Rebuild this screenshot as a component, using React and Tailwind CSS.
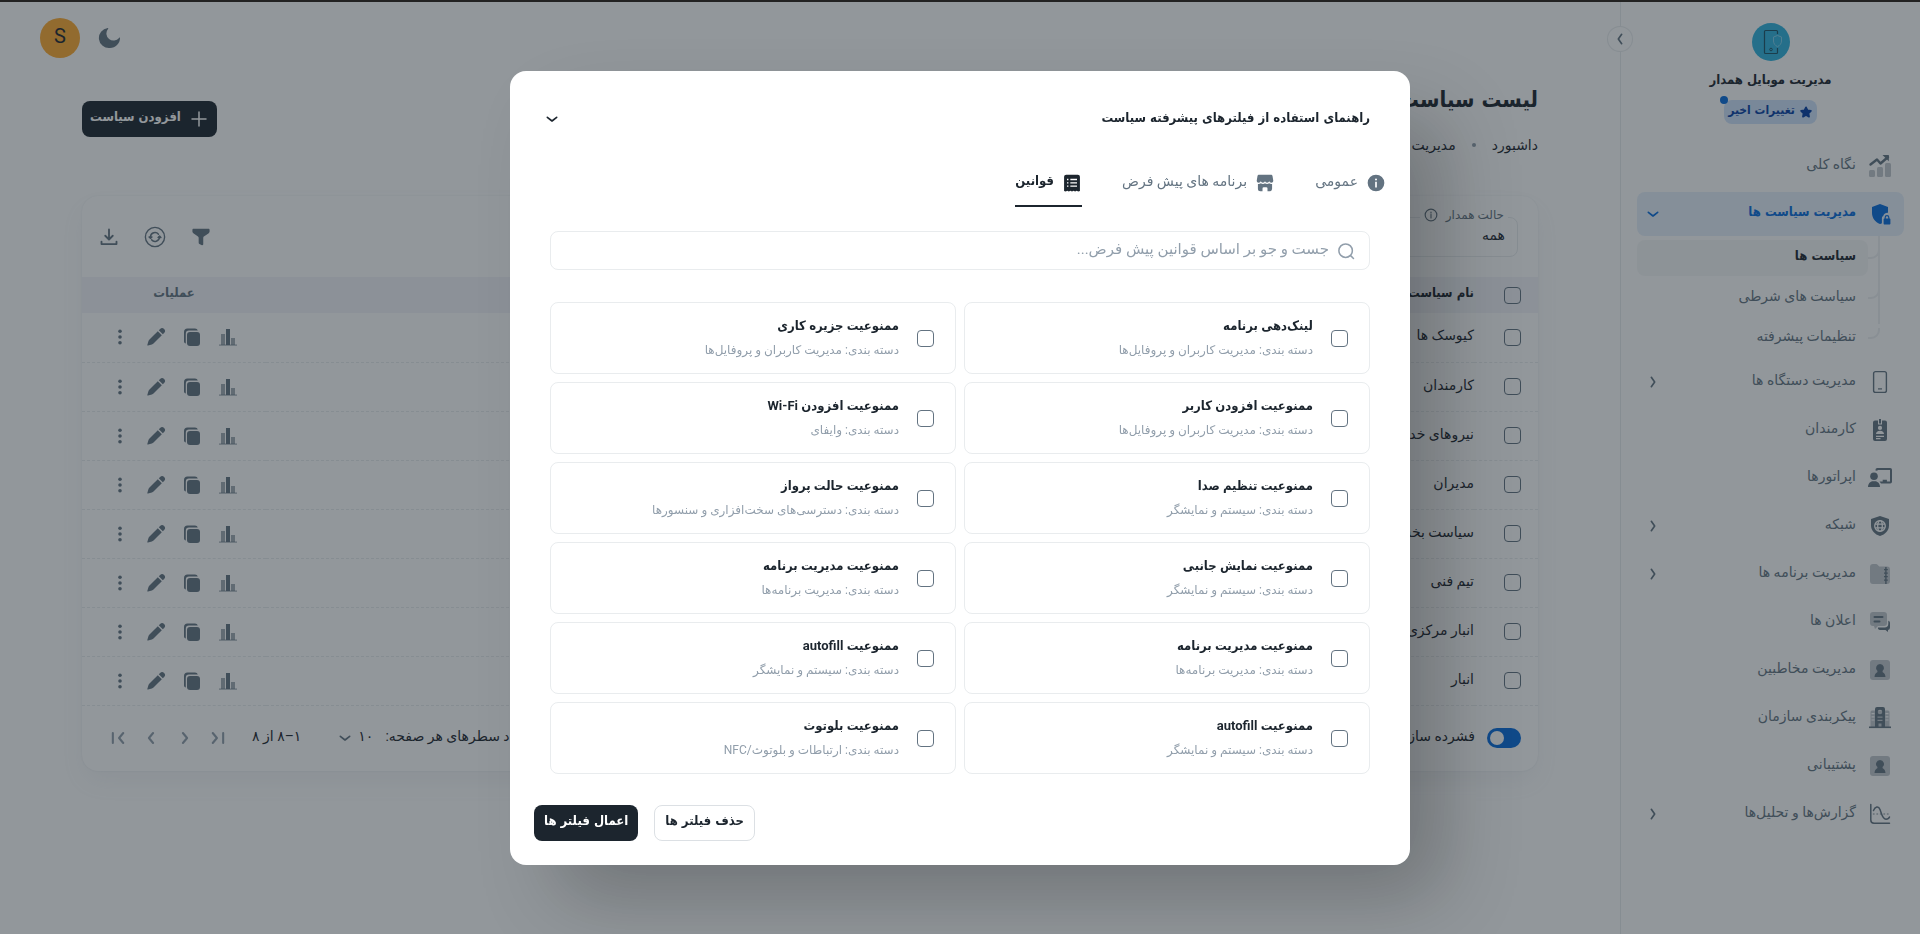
import React, { useState } from 'react';

const NavIcon = ({ name }) => {
  const icons = {
    overview: (
      <>
        <rect x="1" y="16" width="6" height="7" rx="1.5" opacity="0.4" />
        <rect x="9" y="13" width="6" height="10" rx="1.5" opacity="0.4" />
        <rect x="17" y="9" width="6" height="14" rx="1.5" opacity="0.4" />
        <path d="M2.5 10.5L9 5.5L12.5 9.5L20 3" fill="none" stroke="currentColor" strokeWidth="2.4" strokeLinejoin="round" strokeLinecap="round" />
        <path d="M14.5 1h6.3v6.2z" />
      </>
    ),
    policies: (
      <>
        <path d="M12 2L4 5v6.1c0 5 3.3 9.4 8 10.9c.7-.2 1.3-.5 1.9-.8v-5.2a2 2 0 0 1 1.3-1.9C15.6 12 17.5 10.5 20 10.7V5z" />
        <path d="M21.4 16.4v-1a2.4 2.4 0 0 0-4.8 0v1c-.6 0-1 .4-1 1v4c0 .6.4 1 1 1h4.800c.6 0 1-.4 1-1v-4c0-.6-.4-1-1-1zm-3.6 0v-1a1.2 1.2 0 0 1 2.4 0v1z" />
      </>
    ),
    devices: (
      <>
        <rect x="5.6" y="1.6" width="12.8" height="20.8" rx="2" fill="none" stroke="currentColor" strokeWidth="1.4" />
        <rect x="10" y="18.3" width="4" height="1.2" />
      </>
    ),
    employees: (
      <path
        fillRule="evenodd"
        d="M11 1h2v4.5h-2zM7 2.5h3v4h4v-4h3a2 2 0 0 1 2 2V21a2 2 0 0 1-2 2H7a2 2 0 0 1-2-2V4.500a2 2 0 0 1 2-2zm5 5.300a2 2 0 1 0 0 4.200a2 2 0 0 0 0-4.200zM8 16h8c0-2-1.500-3.300-4-3.300S8 14 8 16zm0 1.800V19h8v-1.200zm0 2.300v1.200h4.500v-1.200z"
      />
    ),
    operators: (
      <>
        <path d="M7.5 4.5V3.8A1.8 1.8 0 0 1 9.300 2h12.900A1.800 1.800 0 0 1 24 3.800v11.900a1.800 1.800 0 0 1-1.800 1.800H13l-1.500-2h3.200v-1.700h4.200v1.700H22V4H9.500v.8z" />
        <circle cx="6" cy="10.3" r="3.8" />
        <path d="M0 21c0-3.500 2.300-5.800 5-5.800h2c2.700 0 5 2.300 5 5.800z" />
      </>
    ),
    network: (
      <>
        <path d="M12 2L3 5v6.200c0 5.200 3.800 9.300 9 10.800c5.200-1.500 9-5.600 9-10.800V5z" />
        <g fill="none" className="stroke-white" strokeWidth="1.3">
          <circle cx="12" cy="12" r="5.3" />
          <ellipse cx="12" cy="12" rx="2.3" ry="5.3" />
          <path d="M7.200 10.200h9.600M7.200 13.800h9.600" />
        </g>
      </>
    ),
    apps: (
      <>
        <path opacity="0.4" d="M2 5a3 3 0 0 1 3-3h2.500c1 0 1.600.3 2.300 1l1.400 1.400H19a3 3 0 0 1 3 3V19a3 3 0 0 1-3 3H5a3 3 0 0 1-3-3z" />
        <path d="M17.200 5h1.400v17h-1.400z" />
        <path d="M16 7h3.800v1.200H16zM16 10.500h3.800v1.200H16zM16 14h3.800v1.200H16zM16 17.500h3.800v1.200H16z" />
      </>
    ),
    messages: (
      <>
        <path opacity="0.4" d="M5 2h11a3 3 0 0 1 3 3v8a3 3 0 0 1-3 3h-6l-3 3l-1-3H5a3 3 0 0 1-3-3V5a3 3 0 0 1 3-3z" />
        <path d="M6.500 6h8a1 1 0 0 1 0 2h-8a1 1 0 0 1 0-2zM6.500 10.500h5a1 1 0 0 1 0 2h-5a1 1 0 0 1 0-2z" />
        <path d="M20.300 10.800c1 .2 1.700 1 1.700 2.200v4.500a2.500 2.500 0 0 1-2 2.500v2l-2.500-2H12a2 2 0 0 1-2-2.500h6.500a3.800 3.800 0 0 0 3.800-3.800z" />
      </>
    ),
    contacts: (
      <>
        <rect x="2" y="2" width="20" height="20" rx="3" opacity="0.4" />
        <path d="M12 6a4 4 0 0 0-2.500 7.100l-.2 1.200C7.600 15 6.600 16.800 6.500 19h11c-.1-2.200-1.100-4-2.800-4.700l-.2-1.200A4 4 0 0 0 12 6z" />
      </>
    ),
    organization: (
      <>
        <path opacity="0.4" fillRule="evenodd" d="M2.500 6a1.500 1.500 0 0 1 1.500-1.500h16A1.500 1.500 0 0 1 21.500 6v15h-19zM3.500 7v1.200h3V7zm0 3.200v1.200h3v-1.200zm0 3.200v1.200h3v-1.200zM17.500 7v1.200h3V7zm0 3.200v1.200h3v-1.200zm0 3.200v1.200h3v-1.200z" />
        <path fillRule="evenodd" d="M9 1h6a2 2 0 0 1 2 2v18h-3.500v-3.500h-3V21H7V3a2 2 0 0 1 2-2zm3 2.700a2.300 2.300 0 1 0 0 4.600a2.300 2.300 0 0 0 0-4.600zM9.500 10.500v1.200h5v-1.200zm0 3.200v1.200h5v-1.200z" />
        <rect x="1" y="20.5" width="22" height="1.6" />
      </>
    ),
    reports: (
      <g fill="none" stroke="currentColor" strokeWidth="1.5" strokeLinecap="round">
        <path d="M2.800 2.500V18a3.200 3.200 0 0 0 3.200 3.200h15.500" />
        <path d="M5.500 8.500C7 4.500 10.500 3.500 12 7.500c1.500 4 2.500 9.800 6 9.800c1.800 0 3-1 3.500-2.300" />
        <path d="M5.500 12h16" strokeDasharray="0.5 3" opacity="0.6" />
      </g>
    ),
  };
  return (
    <svg viewBox="0 0 24 24" fill="currentColor" className="size-6 shrink-0" aria-hidden="true">
      {icons[name]}
    </svg>
  );
};

const Chevron = ({ className, d }) => (
  <svg viewBox="0 0 24 24" fill="none" stroke="currentColor" strokeWidth="2.5" strokeLinecap="round" strokeLinejoin="round" className={className} aria-hidden="true">
    <path d={d} />
  </svg>
);

const CHEVRON_DOWN = 'M5 9.5l7 5.500l7-5.500';
const CHEVRON_LEFT = 'M14.500 5l-5 7l5 7';
const CHEVRON_RIGHT = 'M9.500 5l5 7l-5 7';

const Checkbox = ({ id, label }) => (
  <input
    id={id}
    type="checkbox"
    aria-label={label}
    className="block size-[17px] shrink-0 appearance-none rounded border border-[#637381] checked:bg-[#637381]"
  />
);

const topItems = [
  { icon: 'overview', title: 'نگاه کلی' },
];

const policyItems = ['سیاست ها', 'سیاست های شرطی', 'تنظیمات پیشرفته'];

const bottomItems = [
  { icon: 'devices', title: 'مدیریت دستگاه ها', children: true },
  { icon: 'employees', title: 'کارمندان' },
  { icon: 'operators', title: 'اپراتورها' },
  { icon: 'network', title: 'شبکه', children: true },
  { icon: 'apps', title: 'مدیریت برنامه ها', children: true },
  { icon: 'messages', title: 'اعلان ها' },
  { icon: 'contacts', title: 'مدیریت مخاطبین' },
  { icon: 'organization', title: 'پیکربندی سازمان' },
  { icon: 'contacts', title: 'پشتیبانی' },
  { icon: 'reports', title: 'گزارش‌ها و تحلیل‌ها', children: true },
];

const rows = ['کیوسک ها', 'کارمندان', 'نیروهای خدماتی', 'مدیران', 'سیاست بخش اداری', 'تیم فنی', 'انبار مرکزی', 'انبار'];

const rules = [
  { title: 'لینک‌دهی برنامه', category: 'مدیریت کاربران و پروفایل‌ها' },
  { title: 'ممنوعیت جزیره کاری', category: 'مدیریت کاربران و پروفایل‌ها' },
  { title: 'ممنوعیت افزودن کاربر', category: 'مدیریت کاربران و پروفایل‌ها' },
  { title: 'ممنوعیت افزودن Wi-Fi', category: 'وایفای' },
  { title: 'ممنوعیت تنظیم صدا', category: 'سیستم و نمایشگر' },
  { title: 'ممنوعیت حالت پرواز', category: 'دسترسی‌های سخت‌افزاری و سنسورها' },
  { title: 'ممنوعیت نمایش جانبی', category: 'سیستم و نمایشگر' },
  { title: 'ممنوعیت مدیریت برنامه', category: 'مدیریت برنامه‌ها' },
  { title: 'ممنوعیت مدیریت برنامه', category: 'مدیریت برنامه‌ها' },
  { title: 'ممنوعیت autofill', category: 'سیستم و نمایشگر' },
  { title: 'ممنوعیت autofill', category: 'سیستم و نمایشگر' },
  { title: 'ممنوعیت بلوتوث', category: 'ارتباطات و بلوتوث/NFC' },
];

const NavItem = ({ item }) => (
  <a href="#" className="flex h-11 items-center gap-3 rounded-lg pr-3 pl-2 text-[#637381]">
    <NavIcon name={item.icon} />
    <span className="flex-1 pb-1 text-sm">{item.title}</span>
    {item.children && <Chevron className="size-4" d={CHEVRON_RIGHT} />}
  </a>
);

const Sidebar = () => (
  <aside className="relative flex w-[300px] shrink-0 flex-col border-l border-[#919eab]/20 px-4">
    <button aria-label="بستن منو" className="absolute top-6 -left-3.5 flex size-[26px] items-center justify-center rounded-full border border-[#919eab]/20 bg-white text-[#637381]">
      <Chevron className="size-4" d={CHEVRON_LEFT} />
    </button>

    {/* Logo */}
    <div className="flex flex-col items-center pt-5">
      <svg viewBox="0 0 40 40" className="size-10" aria-hidden="true">
        <circle cx="20" cy="20" r="19" fill="#2eb3df" />
        <path d="M26.500 12V9.500a1 1 0 0 0-1-1h-11a1 1 0 0 0-1 1v21a1 1 0 0 0 1 1h11a1 1 0 0 0 1-1V26" fill="none" stroke="#1c5468" strokeWidth="1.2" />
        <circle cx="20" cy="27.5" r="1.3" fill="none" stroke="#1c5468" strokeWidth="1" />
        <path d="M26.500 13.500l4 1.500v4c0 2.500-1.600 4.500-4 5.700c-2.400-1.200-4-3.200-4-5.700v-4z" fill="none" stroke="#7fd0ee" strokeWidth="1" />
      </svg>
      <p className="mt-2 font-['DejaVu_Sans_Condensed',sans-serif] text-[13px] leading-5 font-bold text-[#1c252e]">مدیریت موبایل همدار</p>
      <a href="#" className="relative mt-2.5 flex h-6 items-center gap-1 rounded-lg bg-[#cfe2fb] px-1 text-[#053fa5]">
        <svg viewBox="0 0 24 24" fill="currentColor" stroke="currentColor" strokeWidth="3" strokeLinejoin="round" className="size-3.5" aria-hidden="true">
          <path d="M12 4l2.600 5.200l5.800.9l-4.200 4.100l1 5.800l-5.200-2.800l-5.200 2.800l1-5.800l-4.200-4.100l5.800-.9z" />
        </svg>
        <span className="pb-1 font-['DejaVu_Sans_Condensed',sans-serif] text-xs font-bold">تغییرات اخیر</span>
        <span className="absolute -top-1 -left-1 size-2 rounded-full bg-[#066bdd]" />
      </a>
    </div>

    <nav className="mt-5 flex flex-col gap-1">
      {topItems.map((item) => (
        <NavItem key={item.title} item={item} />
      ))}
      <a href="#" className="flex h-11 items-center gap-3 rounded-lg bg-[#066bdd]/10 pr-3 pl-2 text-[#066bdd]">
        <NavIcon name="policies" />
        <span className="flex-1 pb-1 font-['DejaVu_Sans_Condensed',sans-serif] text-[13px] font-bold">مدیریت سیاست ها</span>
        <Chevron className="size-4" d={CHEVRON_DOWN} />
      </a>
      <ul className="relative flex flex-col gap-1 pr-9">
        <li className="absolute -top-1 right-6 bottom-8 w-0.5 bg-[#edeff2]" aria-hidden="true" />
        {policyItems.map((title, i) => (
          <li key={title} className="relative">
            <svg viewBox="0 0 12 12" className="absolute top-2 -right-3 size-3" fill="none" stroke="#edeff2" strokeWidth="2" aria-hidden="true">
              <path d="M11 0v2a8 8 0 0 1-8 8H0" />
            </svg>
            <a
              href="#"
              className={
                i === 0
                  ? "flex h-9 items-center rounded-lg bg-[#919eab]/8 px-3 font-['DejaVu_Sans_Condensed',sans-serif] text-[13px] font-bold text-[#1c252e]"
                  : 'flex h-9 items-center rounded-lg px-3 text-sm text-[#637381]'
              }
            >
              <span className="pb-1">{title}</span>
            </a>
          </li>
        ))}
      </ul>
      {bottomItems.map((item) => (
        <NavItem key={item.title} item={item} />
      ))}
    </nav>
  </aside>
);

const RowActions = () => (
  <div className="flex justify-center text-[#637381]">
    <button aria-label="گزارش" className="flex size-9 items-center justify-center">
      <svg viewBox="0 0 20 20" fill="currentColor" className="size-5">
        <rect x="3" y="7" width="4" height="11" opacity="0.6" />
        <rect x="8" y="2" width="4" height="16" />
        <rect x="13" y="11" width="4" height="7" opacity="0.6" />
        <rect x="1" y="17.5" width="18" height="1.2" opacity="0.6" />
      </svg>
    </button>
    <button aria-label="کپی" className="flex size-9 items-center justify-center">
      <svg viewBox="0 0 20 20" fill="currentColor" className="size-5">
        <rect x="5" y="5" width="13" height="14" rx="3" />
        <path d="M2 14.500V5a3.500 3.500 0 0 1 3.500-3.500H13c1.400 0 2.400.8 2.800 2H7A3.200 3.200 0 0 0 3.800 6.700v9.800C2.700 16.200 2 15.500 2 14.500z" />
      </svg>
    </button>
    <button aria-label="ویرایش" className="flex size-9 items-center justify-center">
      <svg viewBox="0 0 20 20" fill="currentColor" className="size-5">
        <path d="M11.800 4.200l4 4l-8.300 8.300c-.5.500-1 .8-1.600 1L2 18.600c-.5.100-.8-.2-.7-.7l1.200-3.800c.2-.6.500-1.100 1-1.600z" />
        <path d="M12.800 3.200l1.300-1.300a2.800 2.800 0 0 1 4 4l-1.300 1.300z" />
      </svg>
    </button>
    <button aria-label="بیشتر" className="flex size-9 items-center justify-center">
      <svg viewBox="0 0 20 20" fill="currentColor" className="size-5">
        <circle cx="10" cy="4.2" r="1.8" />
        <circle cx="10" cy="10" r="1.8" />
        <circle cx="10" cy="15.8" r="1.8" />
      </svg>
    </button>
  </div>
);

const PolicyTable = () => (
  <section className="mt-10 rounded-2xl bg-white shadow-[0_0_2px_0_rgba(145,158,171,0.2),0_12px_24px_-4px_rgba(145,158,171,0.12)]">
    <div className="flex h-[81px] items-center justify-between pr-5 pl-[9px]">
      <div className="relative">
        <label htmlFor="mode" className="absolute -top-3 right-2.5 flex items-center gap-2 bg-white px-1 text-xs leading-5 text-[#637381]">
          حالت همدار
          <svg viewBox="0 0 24 24" fill="none" stroke="currentColor" strokeWidth="2" className="size-3.5" aria-hidden="true">
            <circle cx="12" cy="12" r="10" />
            <path d="M12 11v6M12 7v1.500" strokeLinecap="round" />
          </svg>
        </label>
        <select id="mode" className="h-10 w-[200px] appearance-none rounded-lg border border-[#919eab]/20 px-3 pb-1 text-sm text-[#1c252e]">
          <option>همه</option>
        </select>
      </div>
      <div className="flex gap-2.5 text-[#637381]">
        <button aria-label="فیلتر" className="flex size-9 items-center justify-center">
          <svg viewBox="0 0 24 24" fill="currentColor" className="size-5">
            <path d="M3 2h18c.8 0 1.300.5 1.300 1.300v2.200c0 1-.6 1.800-1.400 2.300l-5 3.200c-.9.600-1.200 1.100-1.200 2.200v7.600c0 .8-.8 1.400-1.600 1l-3-1.300c-.7-.3-.9-.8-.9-1.500v-5.800c0-1-.3-1.600-1.200-2.200L3.200 7.800C2.300 7.300 1.700 6.500 1.700 5.500V3.300C1.700 2.500 2.200 2 3 2z" />
          </svg>
        </button>
        <button aria-label="بروزرسانی" className="flex size-9 items-center justify-center">
          <svg viewBox="0 0 24 24" fill="none" stroke="currentColor" strokeWidth="1.5" strokeLinecap="round" strokeLinejoin="round" className="size-[22px]">
            <circle cx="12" cy="12" r="10.5" />
            <path d="M7 11.500a5 5 0 0 1 8.800-2.500M17 12.500a5 5 0 0 1-8.800 2.500" />
            <path d="M5.500 12l1.500 1.500l1.700-1.500zM15.300 12.500L17 11l1.500 1.500z" fill="currentColor" />
          </svg>
        </button>
        <button aria-label="دانلود" className="flex size-9 items-center justify-center">
          <svg viewBox="0 0 24 24" fill="none" stroke="currentColor" strokeWidth="2.2" strokeLinecap="round" strokeLinejoin="round" className="size-5">
            <path d="M12 3v11.500M7.500 10.500l4.500 4.500l4.500-4.500M3 17.500v3h18v-3" />
          </svg>
        </button>
      </div>
    </div>

    <table className="w-full border-collapse text-sm text-[#1c252e]">
      <thead className="font-['DejaVu_Sans_Condensed',sans-serif] text-[13px]">
        <tr className="h-9 bg-[#f3f4f9] text-[#637381]">
          <th className="w-16 pr-[17px]">
            <Checkbox label="انتخاب همه" />
          </th>
          <th className="pb-1 text-right font-bold text-[#1c252e]">نام سیاست</th>
          <th className="w-[184px] pb-1 text-center font-bold">عملیات</th>
        </tr>
      </thead>
      <tbody>
        {rows.map((name) => (
          <tr key={name} className="h-[49px] border-b border-dashed border-[#919eab]/20">
            <td className="pr-[17px]">
              <Checkbox label={name} />
            </td>
            <td className="pb-1">{name}</td>
            <td>
              <RowActions />
            </td>
          </tr>
        ))}
      </tbody>
    </table>

    <div className="flex h-[65px] items-center justify-between pr-[17px] pl-[18px] text-sm text-[#1c252e]">
      <label className="flex items-center gap-3">
        <input
          type="checkbox"
          role="switch"
          defaultChecked
          className="flex h-5 w-[34px] appearance-none items-center justify-end rounded-full bg-[#066bdd] px-[3px] before:size-3.5 before:rounded-full before:bg-white"
        />
        <span className="pb-1">فشرده سازی</span>
      </label>
      <div className="flex items-center">
        <label htmlFor="per-page" className="pb-1">تعداد سطرهای هر صفحه:</label>
        <div className="mr-3 flex items-center">
          <select id="per-page" className="appearance-none pb-1 text-sm">
            <option>۱۰</option>
          </select>
          <Chevron className="mr-1 size-4 text-[#637381]" d={CHEVRON_DOWN} />
        </div>
        <span className="mr-9 pb-1">۱–۸ از ۸</span>
        <div className="mr-4 flex text-[#919eab]">
          <button aria-label="صفحه اول" className="flex h-9 w-[34px] items-center justify-center">
            <Chevron className="size-5" d="M4.500 6l5 6l-5 6M17 6v12" />
          </button>
          <button aria-label="صفحه قبل" className="flex h-9 w-[34px] items-center justify-center">
            <Chevron className="size-5" d="M9.500 6l5 6l-5 6" />
          </button>
          <button aria-label="صفحه بعد" className="flex h-9 w-[34px] items-center justify-center">
            <Chevron className="size-5" d="M14.500 6l-5 6l5 6" />
          </button>
          <button aria-label="صفحه آخر" className="flex h-9 w-[34px] items-center justify-center">
            <Chevron className="size-5" d="M19.500 6l-5 6l5 6M7 6v12" />
          </button>
        </div>
      </div>
    </div>
  </section>
);

const tabs = [
  {
    id: 'general',
    title: 'عمومی',
    icon: (
      <path fillRule="evenodd" d="M12 2a10 10 0 1 0 0 20a10 10 0 0 0 0-20zm0 4.500a1.200 1.200 0 1 1 0 2.400a1.200 1.200 0 0 1 0-2.400zm-1 4h2v7h-2z" />
    ),
  },
  {
    id: 'apps',
    title: 'برنامه های پیش فرض',
    icon: (
      <>
        <path d="M5 2h14c1.200 0 1.800.5 2 1.600l.9 5.400c.2 1.500-.9 2.700-2.300 2.700c-1.300 0-2.300-.8-2.600-2c-.3 1.200-1.300 2-2.500 2s-2.200-.8-2.500-2c-.3 1.200-1.300 2-2.500 2s-2.200-.8-2.500-2c-.3 1.200-1.300 2-2.600 2C3 11.700 1.900 10.500 2.100 9L3 3.600C3.200 2.500 3.800 2 5 2z" />
        <path d="M3.500 13.200c1.400.2 2.600-.1 3.600-.9c1.400 1.200 3.500 1.200 4.900 0c1.400 1.200 3.500 1.200 4.900 0c1 .8 2.200 1.100 3.600.9V19a3 3 0 0 1-3 3H15v-3.500a1.500 1.500 0 0 0-1.500-1.500h-3A1.500 1.500 0 0 0 9 18.500V22H6.500a3 3 0 0 1-3-3z" />
      </>
    ),
  },
  {
    id: 'rules',
    title: 'قوانین',
    icon: (
      <path
        fillRule="evenodd"
        d="M5 2h14a2.500 2.500 0 0 1 2.500 2.500V21.500l-2 .7l-1.900-1l-1.900 1l-1.900-1l-1.800 1l-1.900-1l-1.900 1l-1.900-1l-1.800 1l-2-.7V4.500A2.500 2.500 0 0 1 5 2zm1 5v1.600h1.700V7zm4 0v1.600h8V7zm-4 4v1.600h1.700V11zm4 0v1.600h8V11zm-4 4v1.600h1.700V15zm4 0v1.600h8V15z"
      />
    ),
  },
];

const FilterDialog = () => {
  const [activeTab, setActiveTab] = useState('rules');

  return (
    <div className="fixed inset-0 top-0.5 flex items-center justify-center bg-[#1c252e]/48">
      <div
        role="dialog"
        aria-modal="true"
        className="w-full max-w-[900px] rounded-2xl bg-white px-6 py-6 shadow-[40px_40px_80px_-8px_rgba(0,0,0,0.24)]"
      >
        <button className="flex h-12 w-full items-center justify-between pr-4 pl-2.5 text-[#1c252e]">
          <span className="pb-0.5 font-['DejaVu_Sans_Condensed',sans-serif] text-[13px] font-bold">راهنمای استفاده از فیلترهای پیشرفته سیاست</span>
          <Chevron className="size-4" d={CHEVRON_DOWN} />
        </button>

        {/* Tabs */}
        <div role="tablist" className="mt-4 flex gap-10">
          {tabs.map((tab) => (
            <button
              key={tab.id}
              role="tab"
              aria-selected={activeTab === tab.id}
              onClick={() => setActiveTab(tab.id)}
              className={
                activeTab === tab.id
                  ? "flex h-12 items-center gap-2 font-['DejaVu_Sans_Condensed',sans-serif] text-[13px] font-bold text-[#1c252e] shadow-[inset_0_-2px_0_0_#1c252e]"
                  : 'flex h-12 items-center gap-2 text-sm text-[#637381]'
              }
            >
              <svg viewBox="0 0 24 24" fill="currentColor" className="size-5" aria-hidden="true">
                {tab.icon}
              </svg>
              <span className="pb-1">{tab.title}</span>
            </button>
          ))}
        </div>

        <div className="px-4">
          <label className="mt-6 flex h-[39px] items-center gap-2 rounded-lg border border-[#919eab]/20 px-3.5">
            <svg viewBox="0 0 24 24" fill="none" stroke="#919eab" strokeWidth="2" strokeLinecap="round" className="size-[18px] shrink-0" aria-hidden="true">
              <circle cx="11.5" cy="11.5" r="9" />
              <path d="M18.500 18.500l3.500 3.500" />
            </svg>
            <input
              type="text"
              aria-label="جست و جو"
              placeholder="جست و جو بر اساس قوانین پیش فرض..."
              className="w-full pb-0.5 text-[15px] outline-none placeholder:text-[#919eab]"
            />
          </label>

          {/* Rules */}
          <div className="mt-8 grid grid-cols-2 gap-2">
            {rules.map((rule, i) => (
              <label key={i} htmlFor={`rule-${i}`} className="flex h-[72px] items-center gap-[18px] rounded-lg border border-[#919eab]/20 pr-[21px]">
                <Checkbox id={`rule-${i}`} />
                <span className="flex flex-col">
                  <span className="font-[Roboto,'DejaVu_Sans_Condensed',sans-serif] text-[13px] leading-6 font-bold text-[#1c252e]">{rule.title}</span>
                  <span className="text-xs leading-6 text-[#919eab]">دسته بندی: {rule.category}</span>
                </span>
              </label>
            ))}
          </div>
        </div>

        {/* Actions */}
        <div className="mt-[31px] flex justify-end gap-4 font-['DejaVu_Sans_Condensed',sans-serif] text-[13px] font-bold">
          <button className="h-9 rounded-lg border border-[#919eab]/32 px-2.5 pb-1 text-[#1c252e]">حذف فیلتر ها</button>
          <button className="h-9 rounded-lg bg-[#1c252e] px-2.5 pb-1 text-white">اعمال فیلتر ها</button>
        </div>
      </div>
    </div>
  );
};

const App = () => {
  return (
    <div dir="rtl" className="flex min-h-screen flex-col bg-white font-[Roboto,'DejaVu_Sans',sans-serif] text-[#1c252e]">
      <div className="h-0.5 bg-[#222222]" />
      <div className="flex flex-1">
        <Sidebar />
        <div className="min-w-0 flex-1">
          <header className="flex h-[72px] items-center justify-end gap-[18px] pl-10">
            <button aria-label="حالت شب" className="text-[#637381]">
              <svg viewBox="0 0 24 24" fill="currentColor" className="size-6">
                <path d="M12 22c5.500 0 10-4.500 10-10c0-.5-.7-.5-.9-.1A6.500 6.500 0 1 1 10 2.900c.4-.4.300-.9-.2-.8A10 10 0 0 0 12 22z" />
              </svg>
            </button>
            <button className="size-10 rounded-full bg-[#ffab30] pb-1 text-xl">S</button>
          </header>

          <main className="mx-auto max-w-[1456px] pt-2">
            <div className="flex items-start justify-between">
              <div>
                <h1 className="font-['DejaVu_Sans_Condensed',sans-serif] text-[22px] leading-9 font-bold">لیست سیاست ها</h1>
                <ul className="mt-4 flex items-center gap-4 text-sm leading-[22px]">
                  <li><a href="#">داشبورد</a></li>
                  <li className="size-1 rounded-full bg-[#919eab]" aria-hidden="true" />
                  <li><a href="#">مدیریت دستگاه ها</a></li>
                </ul>
              </div>
              <button className="mt-[19px] flex h-9 items-center gap-2 rounded-lg bg-[#1c252e] px-2 font-['DejaVu_Sans_Condensed',sans-serif] text-[13px] font-bold text-white">
                <svg viewBox="0 0 20 20" fill="none" stroke="currentColor" strokeWidth="1.5" strokeLinecap="round" className="size-5" aria-hidden="true">
                  <path d="M10 3v14M3 10h14" />
                </svg>
                <span className="pb-1">افزودن سیاست</span>
              </button>
            </div>
            <PolicyTable />
          </main>
        </div>
      </div>
      <FilterDialog />
    </div>
  );
};

export default App;
